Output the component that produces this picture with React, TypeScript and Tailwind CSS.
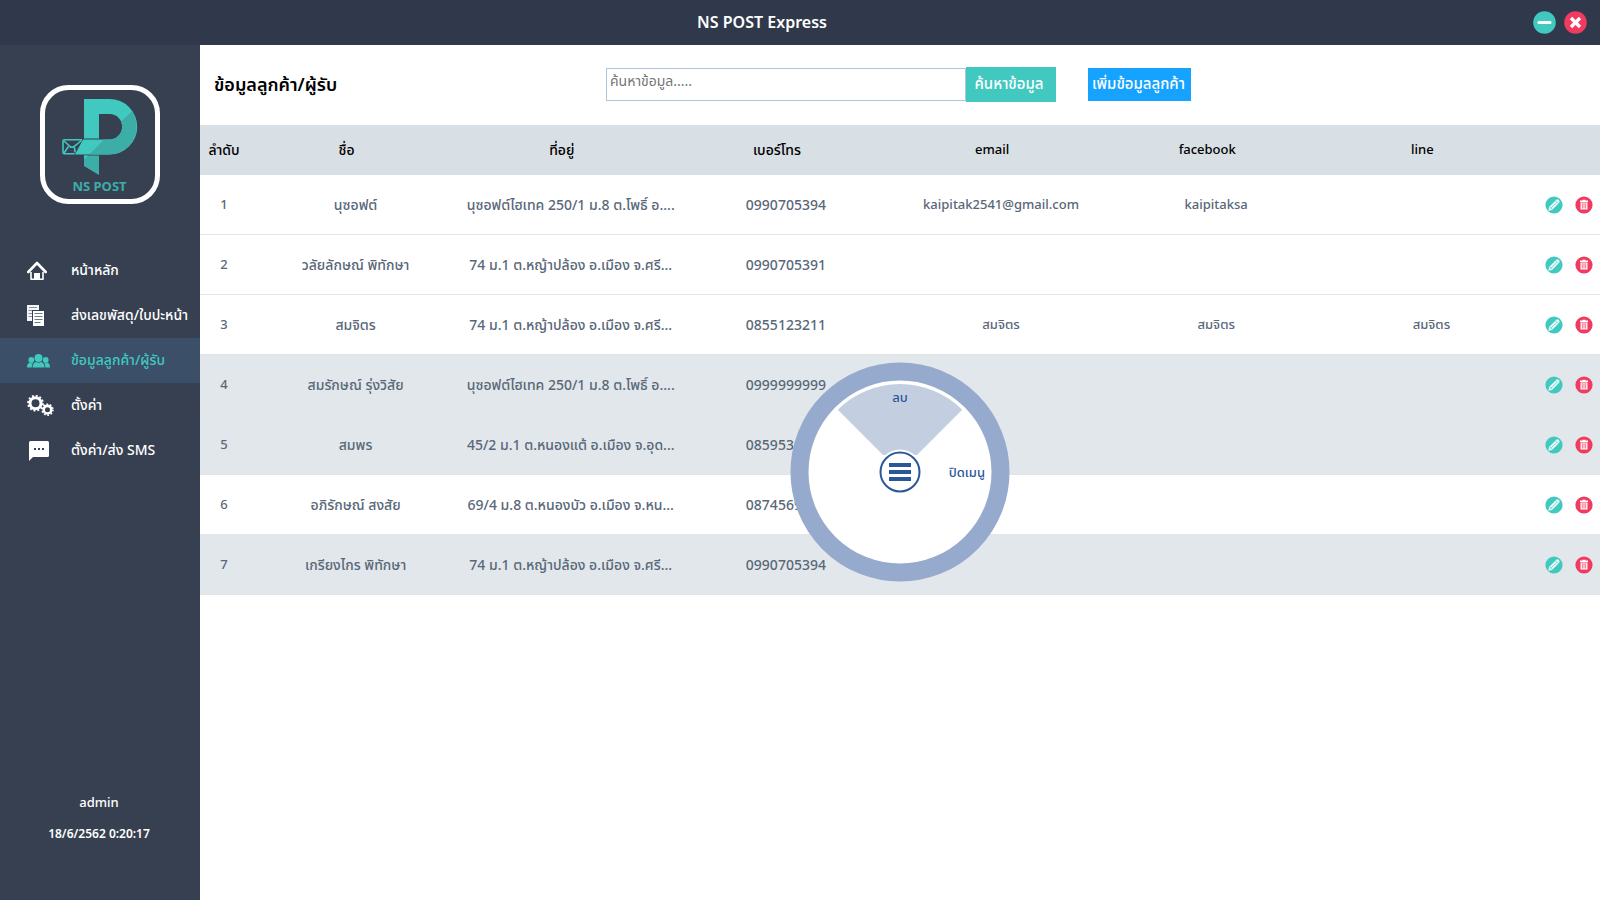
import type { ReactNode } from "react";

type Customer = {
  id: number;
  name: string;
  address: string;
  phone: string;
  email?: string;
  facebook?: string;
  line?: string;
  selected?: boolean;
};

const customers: Customer[] = [
  { id: 1, name: "นุซอฟต์", address: "นุซอฟต์ไฮเทค 250/1 ม.8 ต.โพธิ์ อ....", phone: "0990705394", email: "kaipitak2541@gmail.com", facebook: "kaipitaksa" },
  { id: 2, name: "วลัยลักษณ์ พิทักษา", address: "74 ม.1 ต.หญ้าปล้อง อ.เมือง จ.ศรี...", phone: "0990705391" },
  { id: 3, name: "สมจิตร", address: "74 ม.1 ต.หญ้าปล้อง อ.เมือง จ.ศรี...", phone: "0855123211", email: "สมจิตร", facebook: "สมจิตร", line: "สมจิตร" },
  { id: 4, name: "สมรักษณ์ รุ่งวิสัย", address: "นุซอฟต์ไฮเทค 250/1 ม.8 ต.โพธิ์ อ....", phone: "0999999999", selected: true },
  { id: 5, name: "สมพร", address: "45/2 ม.1 ต.หนองแต้ อ.เมือง จ.อุด...", phone: "0859531234", selected: true },
  { id: 6, name: "อภิรักษณ์ สงสัย", address: "69/4 ม.8 ต.หนองบัว อ.เมือง จ.หน...", phone: "0874569123" },
  { id: 7, name: "เกรียงไกร พิทักษา", address: "74 ม.1 ต.หญ้าปล้อง อ.เมือง จ.ศรี...", phone: "0990705394", selected: true },
];

const thaiColumns = ["ชื่อ", "ที่อยู่", "เบอร์โทร"];
const latinColumns = ["email", "facebook", "line"];

function Logo() {
  return (
    <svg viewBox="0 0 120 120" className="size-[120px]" role="img" aria-label="NS POST">
      <rect x="2.5" y="2.5" width="115" height="114" rx="26" fill="none" stroke="#fff" strokeWidth="5" />
      <path d="M44 14H69.500A27.750 27.750 0 0 1 69.500 69.500H35L43 54.500H69.500A12.750 12.750 0 0 0 69.500 29H59V53.500H44Z" fill="#41c9c0" />
      <path d="M92 26.500A27.750 27.750 0 0 1 69.500 69.500H49.500L64 54.500H69.500A12.750 12.750 0 0 0 81 36.500Z" fill="#3dada8" />
      <path d="M44 70.500H59V90L44 81Z" fill="#3dada8" />
      <path d="M44 70.500H48L44 74.500Z" fill="#41c9c0" />
      <g fill="none" stroke="#41c9c0" strokeWidth="1.600">
        <path d="M42 54.800H24.500Q23 54.800 23 56.300V67.300Q23 68.800 24.500 68.800H34.500" />
        <path d="M24 56 30 61.500Q32 63 34 61.500L41.500 55.500M24 68 28.500 61.500M35 67.500 34.500 62.500" />
      </g>
      <text x="59.500" y="106" textAnchor="middle" fontSize="13" fontWeight="700" fill="#3dada8">NS POST</text>
    </svg>
  );
}

function HomeIcon() {
  return (
    <svg viewBox="0 0 20 20" className="size-5" aria-hidden="true">
      <path d="M1.300 11 10 2l8.700 9" fill="none" stroke="#fff" strokeWidth="2.600" strokeLinecap="round" strokeLinejoin="round" />
      <path d="M4 11V18.300H16V11" fill="none" stroke="#fff" strokeWidth="1.600" strokeLinejoin="round" />
      <path d="M7 19V12H13V19Z" fill="#fff" />
    </svg>
  );
}

function DocumentsIcon() {
  return (
    <svg viewBox="0 0 17 21" className="h-[21px] w-[17px]" aria-hidden="true">
      <path d="M0 0H12V5H5V16H0Z" fill="#f4f5f7" />
      <path d="M2 2.500H10M1.500 5.500H5M1.500 8.500H5M1.500 11.500H5" stroke="#8b929c" />
      <path d="M6 6H17V21H6Z" fill="#fff" />
      <path d="M7.500 8.500H15.500M7.500 11.500H15.500M7.500 14.500H15.500M7.500 17.500H13.500" stroke="#6f7884" />
    </svg>
  );
}

function PeopleIcon() {
  return (
    <svg viewBox="0 0 23 14" className="h-3.5 w-[23px]" fill="#41c9c0" aria-hidden="true">
      <circle cx="11.500" cy="4" r="4" />
      <circle cx="4.300" cy="6" r="2.900" />
      <circle cx="18.700" cy="6" r="2.900" />
      <path d="M5.500 13.500C5.500 10 7 8.500 9 8Q11.500 9.500 14 8C16 8.500 17.500 10 17.500 13.500Z" />
      <path d="M0 13.500C0 10.500 1 9.200 2.500 8.700Q4.300 9.800 6 8.700Q4.800 10.500 4.700 13.500ZM23 13.500C23 10.500 22 9.200 20.500 8.700Q18.700 9.800 17 8.700Q18.200 10.500 18.300 13.500Z" />
    </svg>
  );
}

function GearsIcon() {
  return (
    <svg viewBox="0 0 27 21" className="h-[21px] w-[27px]" fill="none" stroke="#fff" aria-hidden="true">
      <circle cx="8.500" cy="8.200" r="5.500" strokeWidth="3" />
      <circle cx="8.500" cy="8.200" r="7.500" strokeWidth="1.700" strokeDasharray="2 1.927" />
      <circle cx="20.500" cy="14.700" r="3.800" strokeWidth="2.600" />
      <circle cx="20.500" cy="14.700" r="5.500" strokeWidth="1.500" strokeDasharray="1.700 1.756" />
    </svg>
  );
}

function MessageIcon() {
  return (
    <svg viewBox="0 0 20 20" className="ml-0.5 size-5" aria-hidden="true">
      <path d="M1.500 0H18.500Q20 0 20 1.500V14.500Q20 16 18.500 16H4L0 20V1.500Q0 0 1.500 0Z" fill="#fff" />
      <path d="M5 7h2v2H5zM9 7h2v2H9zM13 7h2v2h-2z" fill="#374051" />
    </svg>
  );
}

function EditIcon() {
  return (
    <svg viewBox="0 0 18 18" className="size-[18px]" aria-hidden="true">
      <circle cx="9" cy="9" r="8.600" fill="#41c9c0" />
      <path d="M3.300 14.700 4.100 11 11.300 3.800Q12.500 2.800 13.900 4.100Q15.200 5.500 14.200 6.700L7 13.900Z" fill="#e8fbf9" />
      <path d="M10.500 4.800 13.100 7.400M5.500 12.500 11.500 6.500M5 11 6.900 13" stroke="#41c9c0" strokeWidth=".6" />
    </svg>
  );
}

function TrashIcon() {
  return (
    <svg viewBox="0 0 18 18" className="size-[18px]" aria-hidden="true">
      <circle cx="9" cy="9" r="8.600" fill="#f03a5f" />
      <path d="M5 5.200H13M7.500 4.500H10.500" stroke="#fff" strokeWidth="1.400" />
      <path d="M5.500 6.500H12.500V13.500H5.500Z" fill="#fff" />
      <path d="M7.300 7.200V12.500M9 7.200V12.500M10.700 7.200V12.500" stroke="#f03a5f" strokeWidth=".7" />
    </svg>
  );
}

function NavItem({ icon, label, active }: { icon: ReactNode; label: string; active?: boolean }) {
  return (
    <li>
      <a
        href="#"
        aria-current={active ? "page" : undefined}
        className={
          active
            ? "flex h-[45px] items-center bg-[#3b4f69] pl-[27px] text-[#41c9c0]"
            : "flex h-[45px] items-center pl-[27px] text-white"
        }
      >
        <span className="w-11 shrink-0">{icon}</span>
        <span className="pb-0.5 text-sm leading-5 whitespace-nowrap">{label}</span>
      </a>
    </li>
  );
}

function RadialMenu() {
  return (
    <div className="absolute top-[237px] left-[590px] size-[220px] text-[13px] font-medium text-[#2a579a]" role="menu">
      <svg viewBox="0 0 220 220" className="size-full" aria-hidden="true">
        <circle cx="110" cy="110" r="100.500" fill="#fff" stroke="#95aacc" strokeWidth="18" />
        <path d="M110 110 47.800 47.800A88 88 0 0 1 172.200 47.800Z" fill="#c3cfe0" />
        <path d="M90 93H130V112H90Z" fill="#fff" />
        <circle cx="110" cy="110" r="22.500" fill="#fff" />
        <circle cx="110" cy="110" r="19.500" fill="#fff" stroke="#2a579a" strokeWidth="2" />
        <path d="M99 103H121M99 110H121M99 117H121" stroke="#2a579a" strokeWidth="4" />
      </svg>
      <button type="button" role="menuitem" className="absolute inset-x-0 top-[25px] mx-auto w-16 leading-5">ลบ</button>
      <button type="button" role="menuitem" className="absolute top-[100px] right-[25px] leading-5 whitespace-nowrap">ปิดเมนู</button>
    </div>
  );
}

export default function App() {
  return (
    <div className="flex min-h-screen flex-col bg-white font-['Noto_Sans','Noto_Sans_Thai',sans-serif] text-[13px] font-medium">
      <header className="flex h-[45px] items-center bg-[#2f394b] text-white">
        <h1 className="flex-1 pb-0.5 text-center text-base font-semibold">NS POST Express</h1>
        <div className="flex w-[76px] gap-2 pl-[9px]">
          <button type="button" aria-label="Minimize">
            <svg viewBox="0 0 23 23" className="size-[23px]" aria-hidden="true">
              <circle cx="11.500" cy="11.500" r="11.300" fill="#41c9c0" />
              <path d="M6 11.500H17" stroke="#fff" strokeWidth="3" strokeLinecap="round" />
            </svg>
          </button>
          <button type="button" aria-label="Close">
            <svg viewBox="0 0 23 23" className="size-[23px]" aria-hidden="true">
              <circle cx="11.500" cy="11.500" r="11.300" fill="#f03a5f" />
              <path d="M7 7 16 16M16 7 7 16" stroke="#fff" strokeWidth="3.400" />
            </svg>
          </button>
        </div>
      </header>

      <div className="flex flex-1">
        <aside className="flex w-[200px] shrink-0 flex-col bg-[#374051] text-white">
          <div className="flex justify-center pt-10">
            <Logo />
          </div>
          <nav className="mt-[43px]">
            <ul>
              <NavItem icon={<HomeIcon />} label="หน้าหลัก" />
              <NavItem icon={<DocumentsIcon />} label="ส่งเลขพัสดุ/ใบปะหน้า" />
              <NavItem icon={<PeopleIcon />} label="ข้อมูลลูกค้า/ผู้รับ" active />
              <NavItem icon={<GearsIcon />} label="ตั้งค่า" />
              <NavItem icon={<MessageIcon />} label="ตั้งค่า/ส่ง SMS" />
            </ul>
          </nav>
          <div className="mt-auto space-y-3 pr-0.5 pb-14 text-center">
            <p className="text-[13px] leading-5">admin</p>
            <p className="text-xs leading-5 font-semibold">18/6/2562 0:20:17</p>
          </div>
        </aside>

        <main className="min-w-0 flex-1">
          <div className="flex h-20 items-center pb-0.5">
            <h2 className="w-[406px] shrink-0 pl-3.5 text-lg font-semibold text-black">ข้อมูลลูกค้า/ผู้รับ</h2>
            <form className="flex items-center">
              <input
                type="search"
                aria-label="ค้นหาข้อมูล"
                placeholder="ค้นหาข้อมูล....."
                className="h-[33px] w-[360px] border border-[#b0c4de] px-[3px] pb-2 text-sm font-normal placeholder:text-[#757575]"
              />
              <button type="button" className="h-[35px] w-[90px] bg-[#41c9c0] pr-1 pb-0.5 text-[15px] whitespace-nowrap text-white">ค้นหาข้อมูล</button>
            </form>
            <button type="button" className="ml-8 h-[33px] w-[103px] bg-[#16a3ff] pr-0.5 pb-0.5 text-[15px] whitespace-nowrap text-white">เพิ่มข้อมูลลูกค้า</button>
          </div>

          <div className="relative">
            <table className="w-full table-fixed border-separate border-spacing-0 text-center">
              <colgroup>
                <col className="w-12" />
                {thaiColumns.map((c) => <col key={c} />)}
                {latinColumns.map((c) => <col key={c} />)}
                <col className="w-[61px]" />
              </colgroup>
              <thead>
                <tr className="h-[50px] bg-[#d8dfe5] text-black">
                  <th className="text-sm font-medium">ลำดับ</th>
                  {thaiColumns.map((c) => <th key={c} className="pr-[18px] text-sm font-medium">{c}</th>)}
                  {latinColumns.map((c) => <th key={c} className="pr-[18px] font-medium">{c}</th>)}
                  <td />
                </tr>
              </thead>
              <tbody className="text-[#596779] [&_td]:border-b [&_td]:border-[#e2e4e6]">
                {customers.map((c) => (
                  <tr key={c.id} className={c.selected ? "h-[60px] bg-[#e2e7eb]" : "h-[60px]"}>
                    <td>{c.id}</td>
                    <td className="text-sm">{c.name}</td>
                    <td className="text-sm whitespace-nowrap">{c.address}</td>
                    <td className="text-sm">{c.phone}</td>
                    <td>{c.email}</td>
                    <td>{c.facebook}</td>
                    <td>{c.line}</td>
                    <td>
                      <div className="flex gap-3 pl-1.5">
                        <button type="button" aria-label="แก้ไข"><EditIcon /></button>
                        <button type="button" aria-label="ลบ"><TrashIcon /></button>
                      </div>
                    </td>
                  </tr>
                ))}
              </tbody>
            </table>
            <RadialMenu />
          </div>
        </main>
      </div>
    </div>
  );
}
